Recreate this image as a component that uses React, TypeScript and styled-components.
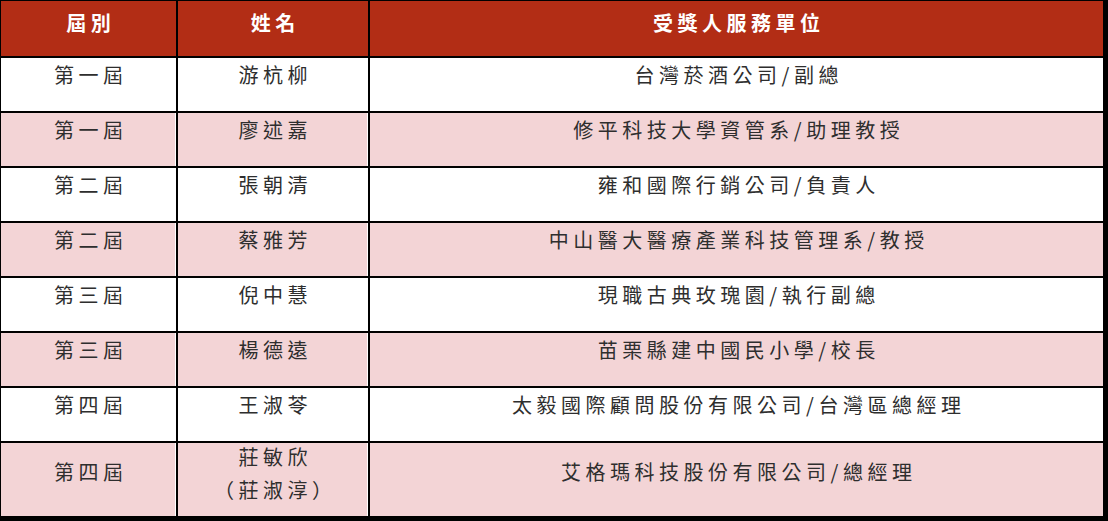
import React from 'react';
import styled, { createGlobalStyle } from 'styled-components';

type Row = {
  term: string;
  name: string[];
  unit: string;
};

const rows: Row[] = [
  { term: '第一屆', name: ['游杭柳'], unit: '台灣菸酒公司/副總' },
  { term: '第一屆', name: ['廖述嘉'], unit: '修平科技大學資管系/助理教授' },
  { term: '第二屆', name: ['張朝清'], unit: '雍和國際行銷公司/負責人' },
  { term: '第二屆', name: ['蔡雅芳'], unit: '中山醫大醫療產業科技管理系/教授' },
  { term: '第三屆', name: ['倪中慧'], unit: '現職古典玫瑰園/執行副總' },
  { term: '第三屆', name: ['楊德遠'], unit: '苗栗縣建中國民小學/校長' },
  { term: '第四屆', name: ['王淑苓'], unit: '太毅國際顧問股份有限公司/台灣區總經理' },
  { term: '第四屆', name: ['莊敏欣', '（莊淑淳）'], unit: '艾格瑪科技股份有限公司/總經理' },
];

export default function App() {
  return (
    <>
      <GlobalStyle />
      <Table>
        <HeadCell>屆別</HeadCell>
        <HeadCell>姓名</HeadCell>
        <HeadCell $lastCol>受獎人服務單位</HeadCell>
        {rows.map((row, index) => {
          const isLast = index === rows.length - 1;
          const pink = index % 2 === 1;
          return (
            <React.Fragment key={row.term + row.name[0]}>
              <BodyCell $pink={pink} $lastRow={isLast}>
                {row.term}
              </BodyCell>
              <BodyCell $pink={pink} $lastRow={isLast} $tight={row.name.length > 1}>
                {row.name.map((line) => (
                  <Line key={line}>{line}</Line>
                ))}
              </BodyCell>
              <BodyCell $pink={pink} $lastRow={isLast} $lastCol>
                {row.unit}
              </BodyCell>
            </React.Fragment>
          );
        })}
      </Table>
    </>
  );
}

const GlobalStyle = createGlobalStyle`
  html, body {
    margin: 0;
    padding: 0;
    background: #ffffff;
  }
`;

const Table = styled.div`
  display: grid;
  grid-template-columns: 177px 192px 1fr;
  width: 1108px;
  box-sizing: border-box;
  border-style: solid;
  border-color: #000;
  border-width: 1px 5px 5px 1px;
  font-family: 'Noto Sans CJK TC', 'Noto Sans CJK SC', sans-serif;
  font-size: 20px;
  letter-spacing: 4.5px;
`;

const Cell = styled.div<{ $lastCol?: boolean }>`
  box-sizing: border-box;
  text-align: center;
  line-height: 28px;
  padding-left: 4.5px;
  border-right: ${({ $lastCol }) => ($lastCol ? 'none' : '2px solid #000')};
`;

const HeadCell = styled(Cell)`
  height: 57px;
  padding-top: 8px;
  background: #b22d15;
  color: #ffffff;
  font-weight: 700;
  border-bottom: 2px solid #000;
`;

const BodyCell = styled(Cell)<{ $pink: boolean; $lastRow: boolean; $tight?: boolean }>`
  height: ${({ $lastRow }) => ($lastRow ? '73px' : '55px')};
  padding-top: ${({ $lastRow, $tight }) => ($tight ? '0' : $lastRow ? '15px' : '3px')};
  display: flex;
  flex-direction: column;
  align-items: center;
  gap: 5px;
  background: ${({ $pink }) => ($pink ? '#f3d4d6' : '#ffffff')};
  color: #2e2e2e;
  border-bottom: ${({ $lastRow }) => ($lastRow ? 'none' : '2px solid #000')};
  box-shadow: ${({ $pink, $lastCol }) => ($pink && !$lastCol ? 'inset -1px 0 0 #ffffff' : 'none')};
`;

const Line = styled.span`
  display: block;
  line-height: 28px;
`;
